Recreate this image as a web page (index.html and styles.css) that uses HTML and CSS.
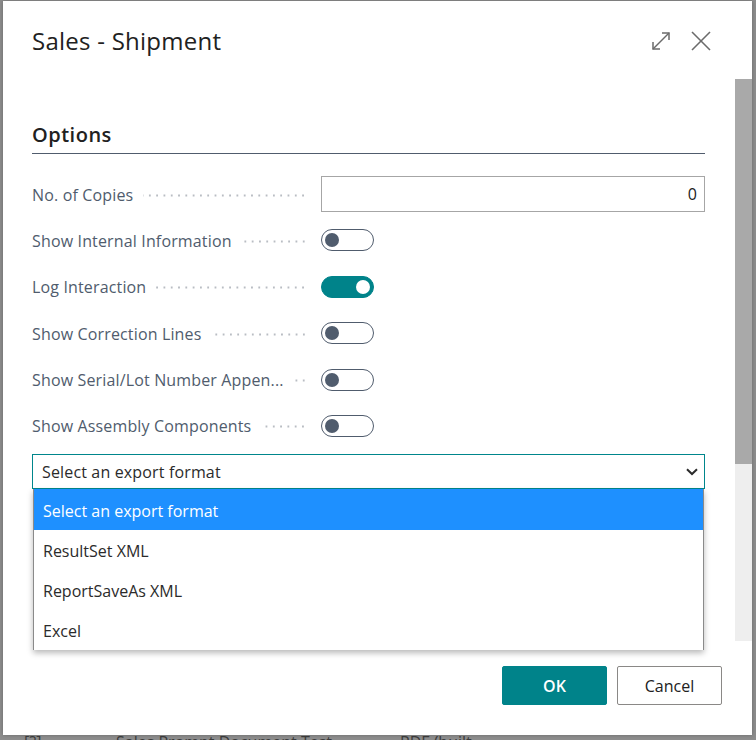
FILE: index.html
```html
<!DOCTYPE html>
<html>
<head>
<meta charset="utf-8">
<title>Sales - Shipment</title>
<link rel="stylesheet" href="styles.css">
</head>
<body>
<div class="backdrop">
  <span class="bd-a">[?]</span><span class="bd-b">Sales Prompt Document Test</span><span class="bd-c">PDF (built-</span>
</div>
<div class="dialog">
  <div class="header">
    <h1 class="title">Sales - Shipment</h1>
    <div class="actions">
      <svg class="icon" width="20" height="20" viewBox="0 0 20 20" fill="none" stroke="#6b6b6b" stroke-width="1.5">
        <path d="M2 18 L18 2"/>
        <path d="M11 2 H18 V9"/>
        <path d="M2 11 V18 H9"/>
      </svg>
      <svg class="icon" width="20" height="20" viewBox="0 0 20 20" fill="none" stroke="#6b6b6b" stroke-width="1.6">
        <path d="M1 1 L19 19"/>
        <path d="M19 1 L1 19"/>
      </svg>
    </div>
  </div>
  <div class="body">
    <div class="content">
      <h2 class="section">Options</h2>
      <div class="row">
        <div class="label"><span>No. of Copies</span><i class="dots"></i></div>
        <div class="input">0</div>
      </div>
      <div class="row">
        <div class="label"><span>Show Internal Information</span><i class="dots"></i></div>
        <div class="toggle"><i class="knob"></i></div>
      </div>
      <div class="row">
        <div class="label"><span>Log Interaction</span><i class="dots"></i></div>
        <div class="toggle on"><i class="knob"></i></div>
      </div>
      <div class="row">
        <div class="label"><span>Show Correction Lines</span><i class="dots"></i></div>
        <div class="toggle"><i class="knob"></i></div>
      </div>
      <div class="row">
        <div class="label"><span>Show Serial/Lot Number Appen...</span><i class="dots"></i></div>
        <div class="toggle"><i class="knob"></i></div>
      </div>
      <div class="row">
        <div class="label"><span>Show Assembly Components</span><i class="dots"></i></div>
        <div class="toggle"><i class="knob"></i></div>
      </div>
      <div class="select-wrap">
        <div class="select">
          <span>Select an export format</span>
          <svg width="12" height="8" viewBox="0 0 12 8" fill="none" stroke="#2b2b2b" stroke-width="2"><path d="M1 1.2 L6 6 L11 1.2"/></svg>
        </div>
        <ul class="menu">
          <li class="active">Select an export format</li>
          <li>ResultSet XML</li>
          <li>ReportSaveAs XML</li>
          <li>Excel</li>
        </ul>
      </div>
    </div>
    <div class="scrollbar"><div class="thumb"></div></div>
  </div>
  <div class="footer">
    <button class="btn primary">OK</button>
    <button class="btn">Cancel</button>
  </div>
</div>
</body>
</html>
```
FILE: styles.css
```css
* { box-sizing: border-box; }
html, body { margin: 0; padding: 0; }
body {
  width: 756px;
  height: 740px;
  overflow: hidden;
  position: relative;
  background: #8d8d8d;
  font-family: "Open Sans", "Noto Sans", sans-serif;
  padding: 1px 4px 0 3px;
}
.backdrop {
  position: absolute;
  left: 0;
  top: 732px;
  width: 756px;
  font-size: 16px;
  line-height: 20px;
  color: #3d3d3d;
  white-space: nowrap;
}
.bd-a { position: absolute; left: 24px; }
.bd-b { position: absolute; left: 116px; }
.bd-c { position: absolute; left: 400px; }

.dialog {
  position: relative;
  z-index: 1;
  width: 749px;
  height: 734px;
  background: #fff;
  display: flex;
  flex-direction: column;
  box-shadow: 0 0 4px rgba(0,0,0,0.25);
}
.header {
  height: 78px;
  flex: none;
  display: flex;
  justify-content: space-between;
  padding: 24px 41px 0 29px;
}
.title {
  margin: 0;
  font-size: 24px;
  line-height: 32px;
  font-weight: 400;
  letter-spacing: 0.25px;
  color: #212121;
}
.actions {
  display: flex;
  gap: 20px;
  padding-top: 6px;
}
.icon { display: block; }

.body {
  height: 562px;
  flex: none;
  display: flex;
}
.content {
  flex: 1;
  position: relative;
  padding: 42px 30px 0 29px;
}
.section {
  margin: 0 0 22px;
  font-size: 20px;
  line-height: 28px;
  font-weight: 600;
  letter-spacing: 0.5px;
  color: #212121;
  padding-bottom: 4px;
  border-bottom: 1px solid #505c6d;
}
.row {
  display: flex;
  align-items: center;
  height: 36px;
  margin-bottom: 10.4px;
}
.label {
  width: 289px;
  flex: none;
  display: flex;
  align-items: center;
  font-size: 16px;
  letter-spacing: 0.15px;
  color: #505c6d;
  white-space: nowrap;
  padding-top: 1px;
}
.dots {
  flex: 1;
  height: 3px;
  margin: 1px 14px 0 10px;
  background-image: radial-gradient(circle, #b9bdc3 0.9px, transparent 1.3px);
  background-size: 7.3px 3px;
  background-position: right center;
  background-repeat: repeat-x;
}
.input {
  flex: 1;
  height: 36px;
  border: 1px solid #a6a6a6;
  text-align: right;
  padding-right: 7px;
  font-size: 16px;
  line-height: 34px;
  color: #212121;
}
.toggle {
  width: 53px;
  height: 22px;
  border: 1.5px solid #505c6d;
  border-radius: 11px;
  display: flex;
  align-items: center;
  padding-left: 3px;
}
.knob {
  width: 14px;
  height: 14px;
  border-radius: 50%;
  background: #505c6d;
}
.toggle.on {
  background: #00838a;
  border-color: #00838a;
  justify-content: flex-end;
  padding-right: 3.5px;
}
.toggle.on .knob { background: #fff; }

.select-wrap { position: relative; }
.select {
  height: 35px;
  border: 1px solid #00868c;
  display: flex;
  align-items: center;
  justify-content: space-between;
  padding: 1px 6px 0 9px;
  font-size: 16px;
  letter-spacing: 0.15px;
  color: #2b2b2b;
}
.menu {
  position: absolute;
  left: 1px;
  top: 35px;
  width: 671px;
  margin: 0;
  padding: 0;
  list-style: none;
  background: #fff;
  border-left: 1px solid #8a8a8a;
  border-right: 1px solid #8a8a8a;
  box-shadow: 0 3px 6px rgba(0,0,0,0.28);
  z-index: 2;
}
.menu li {
  height: 40px;
  padding: 3px 0 0 9px;
  line-height: 37px;
  font-size: 16px;
  color: #2b2b2b;
}
.menu li.active {
  height: 41px;
  line-height: 38px;
  background: #1e90ff;
  color: #fff;
}
.scrollbar {
  width: 17px;
  flex: none;
  background: #eeeeee;
}
.thumb {
  height: 385px;
  background: #a9a9a9;
}
.footer {
  flex: 1;
  display: flex;
  justify-content: flex-end;
  gap: 10px;
  padding: 25px 30px 0 0;
}
.btn {
  width: 105px;
  height: 39px;
  border: 1px solid #8a8886;
  border-radius: 2px;
  background: #fff;
  font-family: inherit;
  font-size: 16px;
  color: #212121;
  padding: 0;
}
.btn.primary {
  background: #00838a;
  border-color: #00838a;
  color: #fff;
  font-weight: 600;
}
```
